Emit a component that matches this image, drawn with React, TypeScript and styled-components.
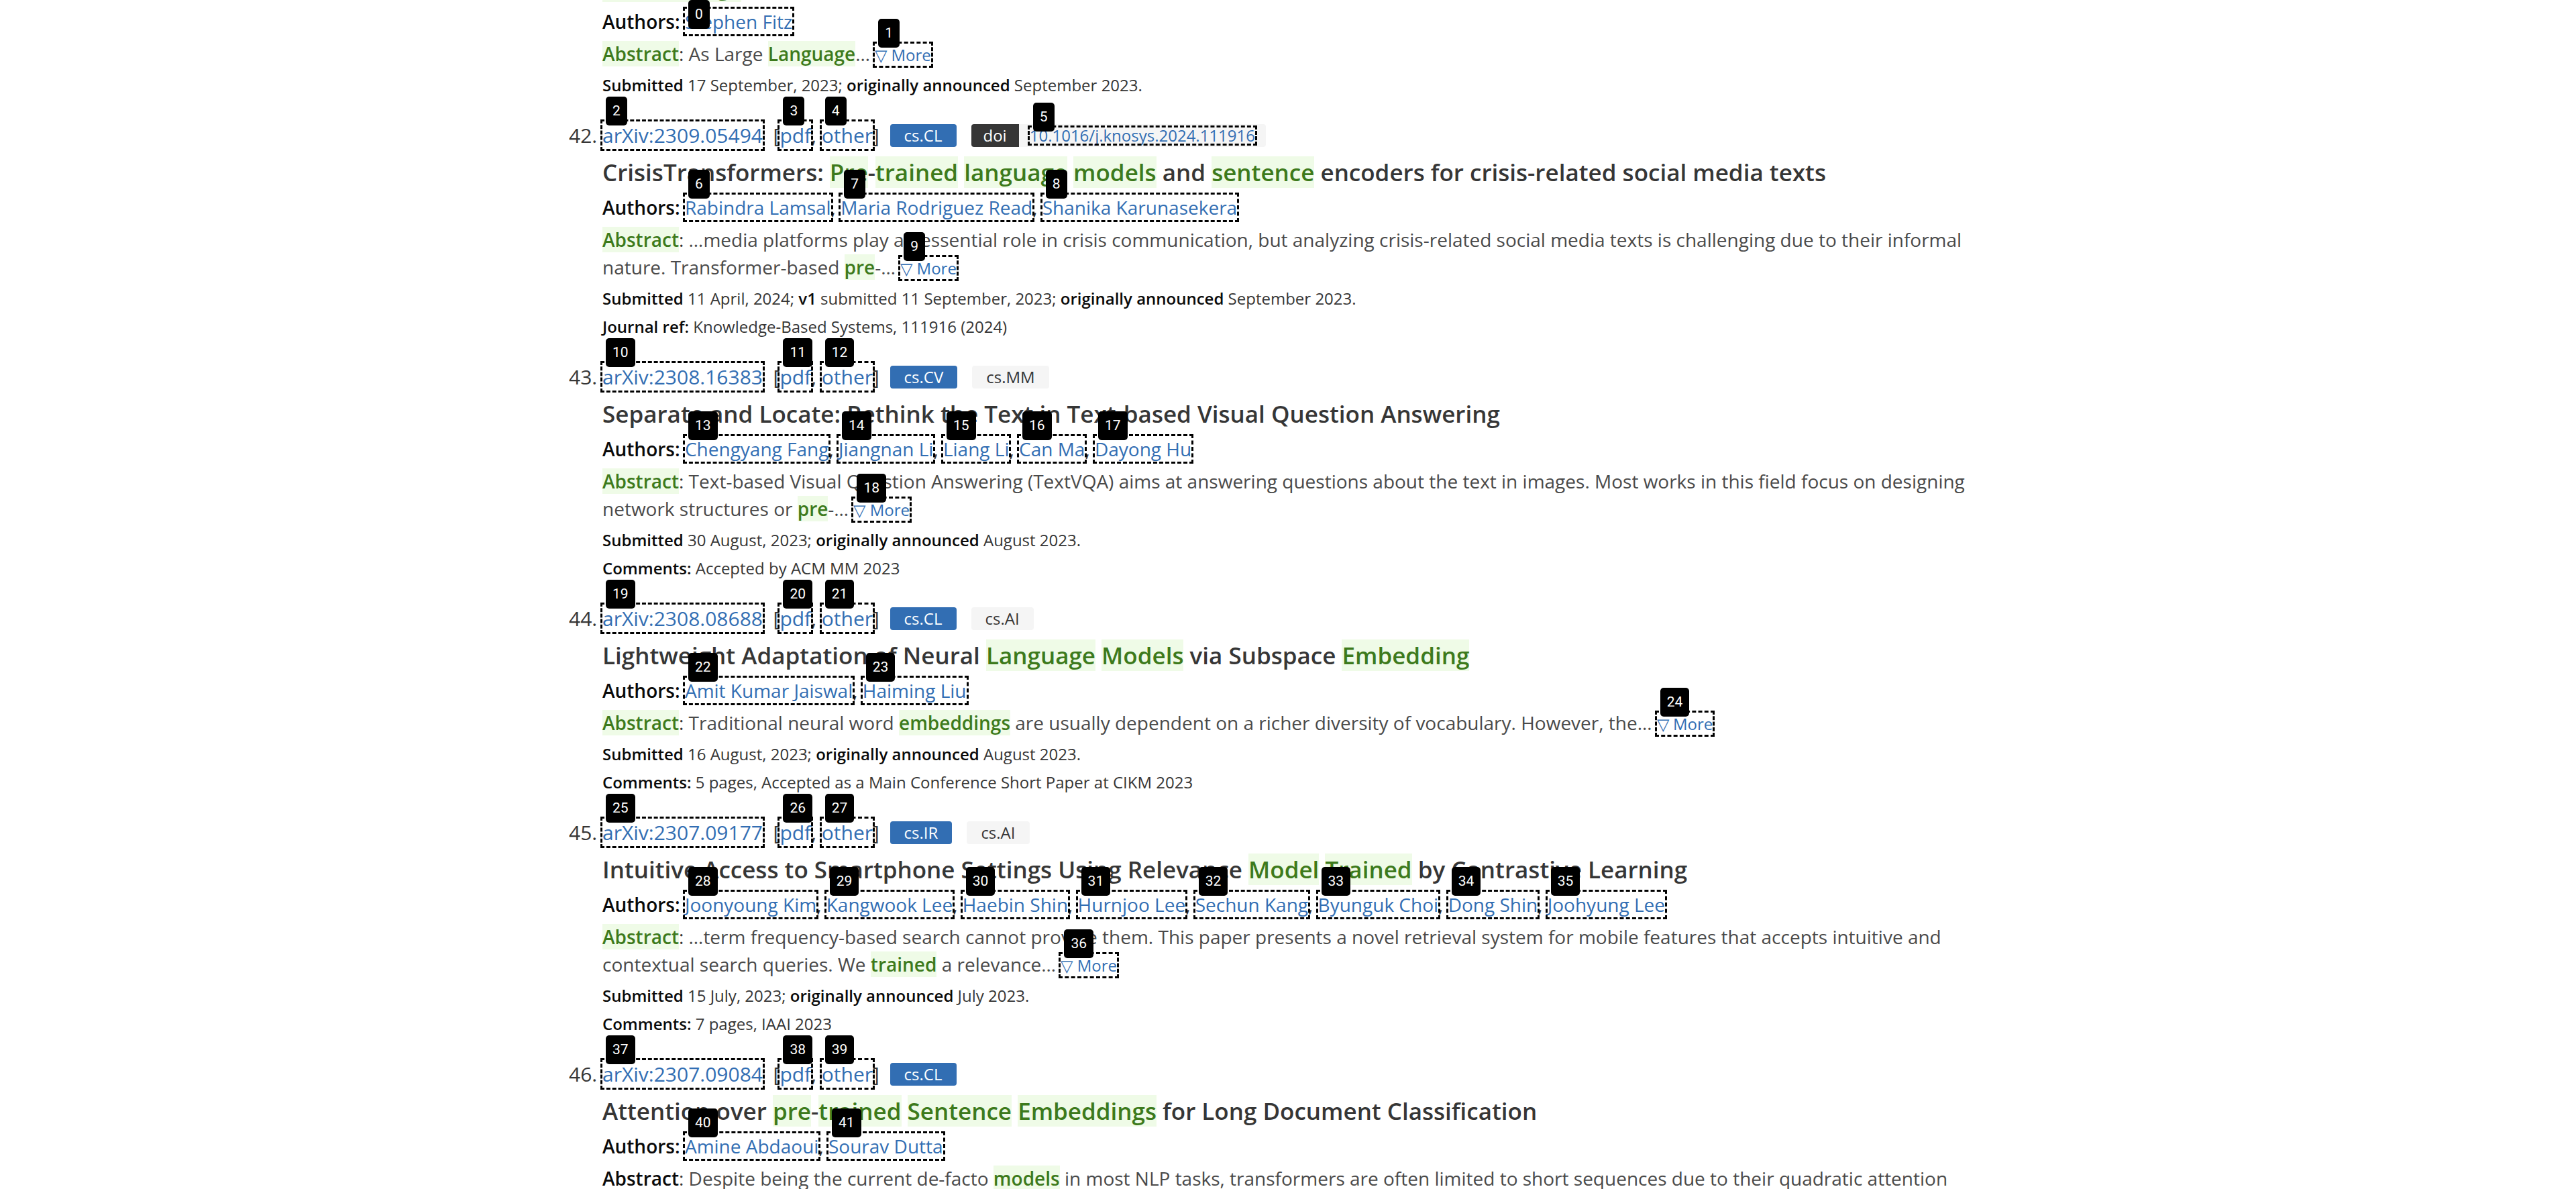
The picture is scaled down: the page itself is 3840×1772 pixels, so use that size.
import React from 'react';
import styled, { createGlobalStyle } from 'styled-components';

const GlobalStyle = createGlobalStyle`
  html, body { margin: 0; padding: 0; background: #ffffff; overflow: hidden; }
  body { font-family: "Open Sans", "Liberation Sans", sans-serif; color: #363636; }
`;

type Seg = string | { h: string };
type Cat = { label: string; tone: 'link' | 'light' };
type MetaLine = [string, string][];

interface EntryData {
  num: number;
  id: string;
  markRow: boolean;
  cats: Cat[];
  doi?: string;
  title: Seg[];
  authors: string[];
  abstractHit: boolean;
  abstract: Seg[];
  more: boolean;
  meta: MetaLine[];
}

const BLUE = '#326eb3';

const entries: EntryData[] = [
  {
    num: 41,
    id: 'arXiv:2309.09397',
    markRow: false,
    cats: [{ label: 'cs.CL', tone: 'link' }, { label: 'cs.AI', tone: 'light' }],
    title: [
      'Do Large GPT ',
      { h: 'Models' },
      ' Discover Moral Dimensions in ',
      { h: 'Language' },
      ' Representations? A Topological Study Of ',
      { h: 'Sentence' },
      ' ',
      { h: 'Embeddings' },
    ],
    authors: ['Stephen Fitz'],
    abstractHit: true,
    abstract: ['As Large ', { h: 'Language' }, '\u2026'],
    more: true,
    meta: [[['Submitted', ' 17 September, 2023; '], ['originally announced', ' September 2023.']]],
  },
  {
    num: 42,
    id: 'arXiv:2309.05494',
    markRow: true,
    cats: [{ label: 'cs.CL', tone: 'link' }],
    doi: '10.1016/j.knosys.2024.111916',
    title: [
      'CrisisTransformers: ',
      { h: 'Pre' },
      '-',
      { h: 'trained' },
      ' ',
      { h: 'language' },
      ' ',
      { h: 'models' },
      ' and ',
      { h: 'sentence' },
      ' encoders for crisis-related social media texts',
    ],
    authors: ['Rabindra Lamsal', 'Maria Rodriguez Read', 'Shanika Karunasekera'],
    abstractHit: true,
    abstract: [
      '\u2026media platforms play an essential role in crisis communication, but analyzing crisis-related social media texts is challenging due to their informal nature. Transformer-based ',
      { h: 'pre' },
      '-\u2026',
    ],
    more: true,
    meta: [
      [['Submitted', ' 11 April, 2024; '], ['v1', ' submitted 11 September, 2023; '], ['originally announced', ' September 2023.']],
      [['Journal ref:', ' Knowledge-Based Systems, 111916 (2024)']],
    ],
  },
  {
    num: 43,
    id: 'arXiv:2308.16383',
    markRow: true,
    cats: [{ label: 'cs.CV', tone: 'link' }, { label: 'cs.MM', tone: 'light' }],
    title: ['Separate and Locate: Rethink the Text in Text-based Visual Question Answering'],
    authors: ['Chengyang Fang', 'Jiangnan Li', 'Liang Li', 'Can Ma', 'Dayong Hu'],
    abstractHit: true,
    abstract: [
      'Text-based Visual Question Answering (TextVQA) aims at answering questions about the text in images. Most works in this field focus on designing network structures or ',
      { h: 'pre' },
      '-\u2026',
    ],
    more: true,
    meta: [
      [['Submitted', ' 30 August, 2023; '], ['originally announced', ' August 2023.']],
      [['Comments:', ' Accepted by ACM MM 2023']],
    ],
  },
  {
    num: 44,
    id: 'arXiv:2308.08688',
    markRow: true,
    cats: [{ label: 'cs.CL', tone: 'link' }, { label: 'cs.AI', tone: 'light' }],
    title: [
      'Lightweight Adaptation of Neural ',
      { h: 'Language' },
      ' ',
      { h: 'Models' },
      ' via Subspace ',
      { h: 'Embedding' },
    ],
    authors: ['Amit Kumar Jaiswal', 'Haiming Liu'],
    abstractHit: true,
    abstract: [
      'Traditional neural word ',
      { h: 'embeddings' },
      ' are usually dependent on a richer diversity of vocabulary. However, the\u2026',
    ],
    more: true,
    meta: [
      [['Submitted', ' 16 August, 2023; '], ['originally announced', ' August 2023.']],
      [['Comments:', ' 5 pages, Accepted as a Main Conference Short Paper at CIKM 2023']],
    ],
  },
  {
    num: 45,
    id: 'arXiv:2307.09177',
    markRow: true,
    cats: [{ label: 'cs.IR', tone: 'link' }, { label: 'cs.AI', tone: 'light' }],
    title: [
      'Intuitive Access to Smartphone Settings Using Relevance ',
      { h: 'Model' },
      ' ',
      { h: 'Trained' },
      ' by Contrastive Learning',
    ],
    authors: [
      'Joonyoung Kim',
      'Kangwook Lee',
      'Haebin Shin',
      'Hurnjoo Lee',
      'Sechun Kang',
      'Byunguk Choi',
      'Dong Shin',
      'Joohyung Lee',
    ],
    abstractHit: true,
    abstract: [
      '\u2026term frequency-based search cannot provide them. This paper presents a novel retrieval system for mobile features that accepts intuitive and contextual search queries. We ',
      { h: 'trained' },
      ' a relevance\u2026',
    ],
    more: true,
    meta: [
      [['Submitted', ' 15 July, 2023; '], ['originally announced', ' July 2023.']],
      [['Comments:', ' 7 pages, IAAI 2023']],
    ],
  },
  {
    num: 46,
    id: 'arXiv:2307.09084',
    markRow: true,
    cats: [{ label: 'cs.CL', tone: 'link' }],
    title: [
      'Attention over ',
      { h: 'pre' },
      '-',
      { h: 'trained' },
      ' ',
      { h: 'Sentence' },
      ' ',
      { h: 'Embeddings' },
      ' for Long Document Classification',
    ],
    authors: ['Amine Abdaoui', 'Sourav Dutta'],
    abstractHit: false,
    abstract: [
      'Despite being the current de-facto ',
      { h: 'models' },
      ' in most NLP tasks, transformers are often limited to short sequences due to their quadratic attention complexity on the number of tokens. Several attempts to address this issue were studied, either by reducing the cost of the self-attention computation or by modeling smaller sequences and combining them through a recurrence mechanism.',
    ],
    more: false,
    meta: [[['Submitted', ' 18 July, 2023; '], ['originally announced', ' July 2023.']]],
  },
];

/* ---------- styled parts ---------- */

const Page = styled.main`
  width: 2160px;
  margin: -140px auto 0;
`;

const ResultList = styled.ol`
  margin: 0;
  padding: 0 50px 0 58px;
  list-style: decimal;
`;

const Result = styled.li`
  font-size: 30px;
  line-height: 1.5;
  color: #363636;
  margin-bottom: 35px;
`;

const IdRow = styled.div`
  display: flex;
  align-items: center;
  height: 45px;
`;

const ListTitle = styled.span`
  white-space: nowrap;
`;

const Link = styled.a`
  position: relative;
  color: ${BLUE};
  text-decoration: none;
  cursor: pointer;
`;

const MarkedLink = styled(Link)`
  outline: 3px dashed #000;
`;

const MoreLink = styled(MarkedLink)`
  font-size: 24px;
`;

const MarkBadge = styled.span<{ $top?: number }>`
  position: absolute;
  left: 5px;
  top: ${(p) => (p.$top !== undefined ? p.$top : -37)}px;
  height: 43px;
  padding: 0 10px;
  border-radius: 5px;
  background: #000;
  color: #fff;
  font-family: Roboto, "Open Sans", sans-serif;
  font-weight: 400;
  font-size: 21px;
  line-height: 43px;
  white-space: nowrap;
  z-index: 3;
`;

const Tags = styled.div`
  display: flex;
  align-items: center;
  gap: 22px;
  margin-left: 8px;
`;

const Tag = styled.span<{ $tone: 'link' | 'light' | 'dark'; $join?: 'left' | 'right' }>`
  display: inline-flex;
  align-items: center;
  height: 34px;
  padding: 0 ${(p) => (p.$join === 'right' ? 16 : p.$tone === 'dark' ? 18 : 21)}px;
  border-radius: ${(p) => (p.$join === 'left' ? '4px 0 0 4px' : p.$join === 'right' ? '0 4px 4px 0' : '4px')};
  font-size: 24px;
  line-height: 1;
  white-space: nowrap;
  background: ${(p) => (p.$tone === 'link' ? BLUE : p.$tone === 'dark' ? '#363636' : '#f5f5f5')};
  color: ${(p) => (p.$tone === 'light' ? '#363636' : '#ffffff')};
`;

const AddonGroup = styled.span`
  display: inline-flex;
`;

const Title = styled.p`
  margin: 12px 0 0;
  font-size: 35px;
  font-weight: 600;
  line-height: 42px;
  color: #363636;
`;

const Hit = styled.span`
  color: #3d7a1c;
  background: #effbe7;
  font-weight: 600;
`;

const Authors = styled.p`
  margin: 11px 0 0;
  font-size: 28px;
  line-height: 40px;
`;

const StrongLabel = styled.span`
  font-weight: 600;
  color: #0a0a0a;
`;

const Abstract = styled.p`
  margin: 8px 0 0;
  font-size: 28px;
  line-height: 41px;
  color: #4a4a4a;
`;

const Colon = styled.span`
  color: #363636;
`;

const Meta = styled.p`
  margin: 8px 0 0;
  font-size: 24px;
  line-height: 34px;
  color: #363636;
`;

/* ---------- helpers ---------- */

const Marked: React.FC<{ n?: number; top?: number; children: React.ReactNode }> = ({ n, top, children }) =>
  n === undefined ? (
    <Link>{children}</Link>
  ) : (
    <MarkedLink>
      {children}
      <MarkBadge $top={top}>{n}</MarkBadge>
    </MarkedLink>
  );

const segs = (list: Seg[]) =>
  list.map((s, i) => (typeof s === 'string' ? <React.Fragment key={i}>{s}</React.Fragment> : <Hit key={i}>{s.h}</Hit>));

export default function App() {
  let counter = 0;
  const next = () => counter++;

  return (
    <>
      <GlobalStyle />
      <Page>
        <ResultList start={41}>
          {entries.map((e) => {
            const idMark = e.markRow ? next() : undefined;
            const pdfMark = e.markRow ? next() : undefined;
            const otherMark = e.markRow ? next() : undefined;
            const doiMark = e.doi && e.markRow ? next() : undefined;
            const authorMarks = e.authors.map(() => next());
            const moreMark = e.more ? next() : undefined;
            // the first visible badge is pinned to the top edge of the window
            const clampTop = e.num === 41 ? -13 : undefined;
            return (
              <Result key={e.num} value={e.num}>
                <IdRow>
                  <ListTitle>
                    <Marked n={idMark}>{e.id}</Marked>
                    {'\u00a0'}
                    <span>
                      {'\u00a0['}
                      <Marked n={pdfMark}>pdf</Marked>
                      {', '}
                      <Marked n={otherMark}>other</Marked>
                      {']\u00a0'}
                    </span>
                  </ListTitle>
                  <Tags>
                    {e.cats.map((c) => (
                      <Tag key={c.label} $tone={c.tone}>
                        {c.label}
                      </Tag>
                    ))}
                    {e.doi && (
                      <AddonGroup>
                        <Tag $tone="dark" $join="left">
                          doi
                        </Tag>
                        <Tag $tone="light" $join="right">
                          <Marked n={doiMark}>{e.doi}</Marked>
                        </Tag>
                      </AddonGroup>
                    )}
                  </Tags>
                </IdRow>
                <Title>{segs(e.title)}</Title>
                <Authors>
                  <StrongLabel>Authors:</StrongLabel>{' '}
                  {e.authors.map((a, i) => (
                    <React.Fragment key={a}>
                      <Marked n={authorMarks[i]} top={i === 0 ? clampTop : undefined}>
                        {a}
                      </Marked>
                      {i < e.authors.length - 1 ? ', ' : ''}
                    </React.Fragment>
                  ))}
                </Authors>
                <Abstract>
                  {e.abstractHit ? <Hit>Abstract</Hit> : <StrongLabel>Abstract</StrongLabel>}
                  <Colon>: </Colon>
                  {segs(e.abstract)}
                  {moreMark !== undefined && (
                    <>
                      {' '}
                      <MoreLink>
                        {'\u25BD More'}
                        <MarkBadge>{moreMark}</MarkBadge>
                      </MoreLink>
                    </>
                  )}
                </Abstract>
                {e.meta.map((line, li) => (
                  <Meta key={li}>
                    {line.map(([b, t], bi) => (
                      <React.Fragment key={bi}>
                        <StrongLabel>{b}</StrongLabel>
                        {t}
                      </React.Fragment>
                    ))}
                  </Meta>
                ))}
              </Result>
            );
          })}
        </ResultList>
      </Page>
    </>
  );
}
